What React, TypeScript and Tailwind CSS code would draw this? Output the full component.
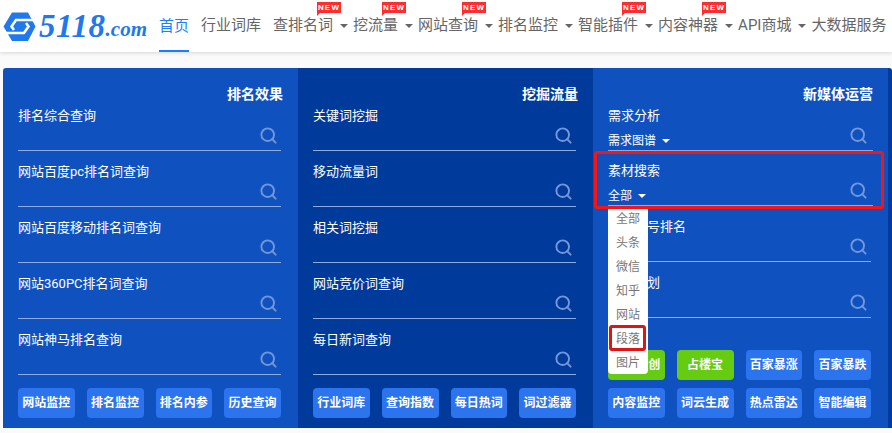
import React from "react";
import { Search } from "lucide-react";

const cjk = "font-['Roboto','Noto_Sans_CJK_SC',sans-serif]";

const navItems = [
  { text: "行业词库" },
  { text: "查排名词", caret: true, isNew: true },
  { text: "挖流量", caret: true, isNew: true },
  { text: "网站查询", caret: true, isNew: true },
  { text: "排名监控", caret: true },
  { text: "智能插件", caret: true, isNew: true },
  { text: "内容神器", caret: true, isNew: true },
  { text: "API商城", caret: true },
  { text: "大数据服务" },
];

const Caret = ({ color }: { color: string }) => (
  <span
    className={`inline-block h-0 w-0 border-x-[4px] border-t-[4px] border-x-transparent ${color}`}
  />
);

const Logo = () => (
  <div className="flex w-[148px] shrink-0 items-center">
    <svg width="33" height="30" viewBox="0 0 33 30" className="ml-[3px] mt-[1px] shrink-0">
      <path d="M0.5 14.5 L9 0.5 H25 L32.5 14.5 L25 29 H9 Z" fill="#1f78ee" strokeLinejoin="round" />
      <path d="M34 8 H13 L8.5 14.5 L11 18" fill="none" stroke="#fff" strokeWidth="2.6" />
      <path d="M-1 21 H21 L25.5 14.5 L23 11" fill="none" stroke="#fff" strokeWidth="2.6" />
    </svg>
    <span className="ml-[3px] font-['Liberation_Serif',serif] text-[33px] font-bold italic leading-none tracking-[0.6px] text-[#1f78ee]">
      5118
    </span>
    <span className="mt-[6px] font-['Liberation_Serif',serif] text-[21px] font-bold italic leading-none text-[#1f78ee]">
      .com
    </span>
  </div>
);

const Header = () => (
  <header className="flex h-[52px] items-stretch bg-white shadow-[0_1px_4px_rgba(0,0,0,0.15)]">
    <Logo />
    <nav className="ml-[11px] flex items-stretch whitespace-nowrap text-[15px] text-[#666]">
      <a className="mr-[12px] flex w-[30px] items-center justify-center border-b-2 border-[#1a7fff] pt-[2px] text-[#1a7fff]">
        首页
      </a>
      {navItems.map((item) => (
        <a
          key={item.text}
          className={`relative flex items-center pb-[1px] ${item.caret ? "mr-[6px]" : "mr-[12px]"}`}
        >
          <span className="relative">
            {item.text}
            {item.isNew && (
              <span className="absolute -right-[8px] -top-[12px] flex h-[11px] w-[24px] items-center justify-center bg-[#ff2d2d] font-['Liberation_Sans',sans-serif] text-[8px] font-bold leading-none tracking-[1.2px] text-white">
                NEW
                <span className="absolute left-0 top-[11px] h-0 w-0 border-r-[3px] border-t-[3px] border-r-transparent border-t-[#ff2d2d]" />
              </span>
            )}
          </span>
          {item.caret && (
            <span className="ml-[7px] flex w-[7px] justify-center">
              <Caret color="border-t-[#666]" />
            </span>
          )}
        </a>
      ))}
    </nav>
  </header>
);

const Row = ({
  label,
  sub,
  wide,
  short,
}: {
  label: string;
  sub?: string;
  wide?: boolean;
  short?: boolean;
}) => (
  <div
    className={`mb-[10px] flex flex-col justify-between border-b border-[#8fabe0] pb-[5px] ${
      short ? "h-[45px]" : "h-[46px] pt-px"
    } ${wide ? "-mr-[2px]" : ""}`}
  >
    <div className="h-5 text-[13px] leading-5 text-white">{label}</div>
    <div className="flex items-end justify-between">
      {sub ? (
        <div className="-mb-[2px] flex items-center gap-[6px] text-[12px] leading-4 text-white">
          {sub}
          <Caret color="border-t-white" />
        </div>
      ) : (
        <span />
      )}
      <Search
        size={19}
        strokeWidth={2.4}
        className={`text-[#7397da] ${wide ? "mb-[2px] mr-[5px]" : "mr-[3px]"}`}
      />
    </div>
  </div>
);

const Buttons = ({ items }: { items: { text: string; green?: boolean }[] }) => (
  <div className="mt-auto grid grid-cols-4 gap-x-3 gap-y-2">
    {items.map((b) => (
      <div
        key={b.text}
        className={`flex h-[30px] items-center justify-center rounded-[4px] text-[12px] font-bold text-white ${
          b.green ? "bg-[#66cc11]" : "bg-[#2c73ee]"
        }`}
      >
        {b.text}
      </div>
    ))}
  </div>
);

const Column = ({
  title,
  bg,
  children,
}: {
  title: string;
  bg: string;
  children: React.ReactNode;
}) => (
  <section className={`flex h-full w-[295px] shrink-0 flex-col pb-[10px] pl-[15px] pr-[17px] pt-4 ${bg}`}>
    <h3 className="-mr-[2px] h-5 text-right text-[14px] font-bold leading-5 text-white">{title}</h3>
    <div className="mt-px flex min-h-0 flex-1 flex-col">{children}</div>
  </section>
);

const dropdown = ["全部", "头条", "微信", "知乎", "网站", "段落", "图片"];

export default function App() {
  return (
    <div className={`h-[433px] w-[892px] overflow-hidden bg-[#fafafa] ${cjk}`}>
      <Header />
      <main className="ml-[3px] mt-4 flex h-[360px] overflow-hidden rounded-t-[3px]">
        <Column title="排名效果" bg="bg-[#0f52bf]">
          <Row label="排名综合查询" />
          <Row label="网站百度pc排名词查询" />
          <Row label="网站百度移动排名词查询" />
          <Row label="网站360PC排名词查询" />
          <Row label="网站神马排名查询" />
          <Buttons
            items={[
              { text: "网站监控" },
              { text: "排名监控" },
              { text: "排名内参" },
              { text: "历史查询" },
            ]}
          />
        </Column>
        <Column title="挖掘流量" bg="bg-[#003a9a]">
          <Row label="关键词挖掘" />
          <Row label="移动流量词" />
          <Row label="相关词挖掘" />
          <Row label="网站竞价词查询" />
          <Row label="每日新词查询" />
          <Buttons
            items={[
              { text: "行业词库" },
              { text: "查询指数" },
              { text: "每日热词" },
              { text: "词过滤器" },
            ]}
          />
        </Column>
        <Column title="新媒体运营" bg="bg-[#0f52bf]">
          <Row label="需求分析" sub="需求图谱" wide />
          <div className="relative">
            <Row label="素材搜索" sub="全部" wide short />
            {/* red highlight around the opened search row */}
            <div className="absolute -left-[14px] -right-[13px] -top-[10px] h-[58px] rounded-[3px] border-[3px] border-[#f81414]" />
            <ul className="absolute left-0 top-[48px] z-10 h-[165px] w-10 rounded-b-[4px] bg-white text-center text-[12px] leading-5 text-[#777]">
              {dropdown.map((d) => (
                <li key={d} className="relative h-6">
                  {d}
                  {d === "段落" && (
                    <span className="absolute -top-[4px] left-px right-[2px] h-[26px] rounded-[3px] border-[3px] border-[#e01414]" />
                  )}
                </li>
              ))}
            </ul>
          </div>
          <Row label="自媒体号排名" />
          <Row label="内容策划" />
          <Buttons
            items={[
              { text: "智能原创", green: true },
              { text: "占楼宝", green: true },
              { text: "百家暴涨" },
              { text: "百家暴跌" },
              { text: "内容监控" },
              { text: "词云生成" },
              { text: "热点雷达" },
              { text: "智能编辑" },
            ]}
          />
        </Column>
        <div className="h-full flex-1 bg-[#003a9a]" />
      </main>
    </div>
  );
}
